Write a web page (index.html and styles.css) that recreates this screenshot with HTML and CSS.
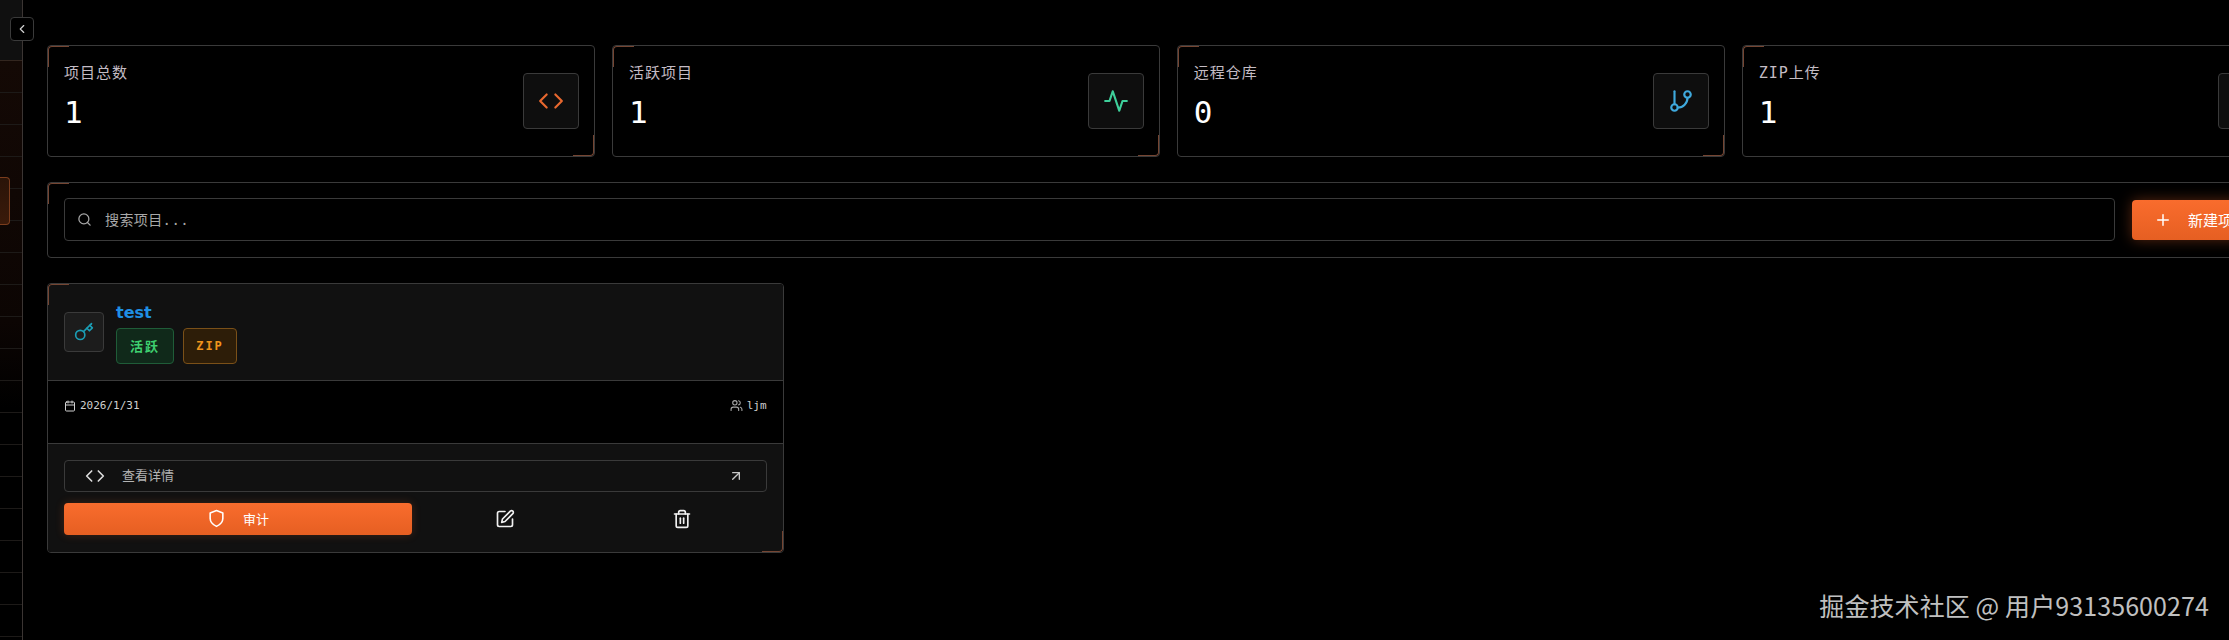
FILE: index.html
```html
<!DOCTYPE html>
<html lang="en">
<head>
    <meta charset="UTF-8">
    <meta name="viewport" content="width=device-width, initial-scale=1.0">
    <title>Projects</title>
    <link rel="stylesheet" href="styles.css">
</head>
<body>
    <div class="app">
        <aside class="sidebar">
            <div class="sidebar-head"></div>
            <div class="sidebar-nav">
                <div class="nav-active"></div>
            </div>
            <button class="toggle">
                <svg class="icon" width="14" height="14" viewBox="0 0 24 24"><path d="m15 18-6-6 6-6"/></svg>
            </button>
        </aside>

        <main class="main">
            <section class="stats">
                <div class="panel stat">
                    <div>
                        <div class="stat-label">项目总数</div>
                        <div class="stat-value">1</div>
                    </div>
                    <div class="stat-icon orange">
                        <svg class="icon" width="26" height="26" viewBox="0 0 24 24"><path d="m16 18 6-6-6-6"/><path d="m8 6-6 6 6 6"/></svg>
                    </div>
                </div>
                <div class="panel stat">
                    <div>
                        <div class="stat-label">活跃项目</div>
                        <div class="stat-value">1</div>
                    </div>
                    <div class="stat-icon green">
                        <svg class="icon" width="26" height="26" viewBox="0 0 24 24"><path d="M22 12h-4l-3 9L9 3l-3 9H2"/></svg>
                    </div>
                </div>
                <div class="panel stat">
                    <div>
                        <div class="stat-label">远程仓库</div>
                        <div class="stat-value">0</div>
                    </div>
                    <div class="stat-icon blue">
                        <svg class="icon" width="26" height="26" viewBox="0 0 24 24"><path d="M6 3v12"/><circle cx="18" cy="6" r="3"/><circle cx="6" cy="18" r="3"/><path d="M18 9a9 9 0 0 1-9 9"/></svg>
                    </div>
                </div>
                <div class="panel stat">
                    <div>
                        <div class="stat-label">ZIP上传</div>
                        <div class="stat-value">1</div>
                    </div>
                    <div class="stat-icon purple">
                        <svg class="icon" width="26" height="26" viewBox="0 0 24 24"><path d="M12 3v12"/><path d="m17 8-5-5-5 5"/><path d="M21 15v4a2 2 0 0 1-2 2H5a2 2 0 0 1-2-2v-4"/></svg>
                    </div>
                </div>
            </section>

            <section class="panel toolbar">
                <div class="search">
                    <svg class="icon" width="15" height="15" viewBox="0 0 24 24"><circle cx="11" cy="11" r="8"/><path d="m21 21-4.3-4.3"/></svg>
                    <input class="search-input" type="text" placeholder="搜索项目...">
                </div>
                <button class="btn-new">
                    <svg class="icon" width="18" height="18" viewBox="0 0 24 24"><path d="M5 12h14"/><path d="M12 5v14"/></svg>
                    <span>新建项目</span>
                </button>
            </section>

            <section class="projects">
                <article class="panel project">
                    <div class="project-head">
                        <div class="project-icon">
                            <svg class="icon" width="20" height="20" viewBox="0 0 24 24"><circle cx="7.5" cy="15.5" r="5.5"/><path d="m21 2-9.6 9.6"/><path d="m15.5 7.5 3 3L22 7l-3-3"/></svg>
                        </div>
                        <div>
                            <div class="project-name">test</div>
                            <div class="badges">
                                <span class="badge badge-green">活跃</span>
                                <span class="badge badge-amber">ZIP</span>
                            </div>
                        </div>
                    </div>
                    <div class="project-meta">
                        <span class="meta-item">
                            <svg class="icon" width="12" height="12" viewBox="0 0 24 24"><path d="M8 2v4"/><path d="M16 2v4"/><rect x="3" y="4" width="18" height="18" rx="2"/><path d="M3 10h18"/></svg>
                            2026/1/31
                        </span>
                        <span class="meta-item">
                            <svg class="icon users-icon" width="13" height="13" viewBox="0 0 24 24"><path d="M16 21v-2a4 4 0 0 0-4-4H6a4 4 0 0 0-4 4v2"/><circle cx="9" cy="7" r="4"/><path d="M22 21v-2a4 4 0 0 0-3-3.87"/><path d="M16 3.13a4 4 0 0 1 0 7.75"/></svg>
                            ljm
                        </span>
                    </div>
                    <div class="project-foot">
                        <button class="btn-view">
                            <svg class="icon code-icon" width="20" height="20" viewBox="0 0 24 24"><path d="m16 18 6-6-6-6"/><path d="m8 6-6 6 6 6"/></svg>
                            <span class="view-text">查看详情</span>
                            <svg class="icon arrow-icon" width="16" height="16" viewBox="0 0 24 24"><path d="M7 7h10v10"/><path d="M7 17 17 7"/></svg>
                        </button>
                        <div class="actions">
                            <button class="btn-audit">
                                <svg class="icon" width="19" height="19" viewBox="0 0 24 24"><path d="M12 22s8-4 8-10V5l-8-3-8 3v7c0 6 8 10 8 10z"/></svg>
                                <span>审计</span>
                            </button>
                            <button class="btn-ghost">
                                <svg class="icon" width="20" height="20" viewBox="0 0 24 24"><path d="M12 3H5a2 2 0 0 0-2 2v14a2 2 0 0 0 2 2h14a2 2 0 0 0 2-2v-7"/><path d="M18.4 2.6a2.1 2.1 0 0 1 3 3L12 15l-4 1 1-4z"/></svg>
                            </button>
                            <button class="btn-ghost">
                                <svg class="icon" width="20" height="20" viewBox="0 0 24 24"><path d="M3 6h18"/><path d="M19 6v14c0 1-1 2-2 2H7c-1 0-2-1-2-2V6"/><path d="M8 6V4c0-1 1-2 2-2h4c1 0 2 1 2 2v2"/><path d="M10 11v6"/><path d="M14 11v6"/></svg>
                            </button>
                        </div>
                    </div>
                </article>
            </section>
        </main>
    </div>

    <div class="watermark">掘金技术社区 @ 用户93135600274</div>
</body>
</html>
```

FILE: styles.css
```css
* {
    box-sizing: border-box;
}

html, body {
    margin: 0;
    padding: 0;
    height: 640px;
    overflow: hidden;
    background: #000;
}

body {
    font-family: "DejaVu Sans Mono", "Noto Sans CJK SC", monospace;
    color: #fff;
}

button {
    font-family: inherit;
    cursor: pointer;
}

.icon {
    display: block;
    flex: none;
    fill: none;
    stroke: currentColor;
    stroke-width: 2;
    stroke-linecap: round;
    stroke-linejoin: round;
}

.app {
    display: flex;
    height: 640px;
}

/* sidebar, mostly collapsed out of view */
.sidebar {
    position: relative;
    flex: none;
    width: 23px;
    height: 640px;
    border-right: 1px solid #3b3533;
}

.sidebar-head {
    height: 61px;
    background: #101010;
    border-bottom: 1px solid #33261f;
}

.sidebar-nav {
    height: 579px;
    padding-top: 116px;
    background-image:
        repeating-linear-gradient(to bottom, transparent 0, transparent 31px, #1d1a18 31px, #1d1a18 32px),
        linear-gradient(to bottom, #140905 0, #0c0503 45%, #000 60%);
}

.nav-active {
    width: 10px;
    height: 48px;
    background: linear-gradient(to bottom, #2a1408, #3a1a0a);
    border: 1px solid #7b3d1d;
    border-left: none;
    border-radius: 0 4px 4px 0;
}

.toggle {
    position: absolute;
    top: 17px;
    left: 10px;
    display: flex;
    align-items: center;
    justify-content: center;
    width: 24px;
    height: 24px;
    padding: 0;
    background: #000;
    border: 1px solid #3a3a3a;
    border-radius: 4px;
    color: #d0d0d0;
}

.main {
    flex: none;
    width: 2267px;
    padding: 45px 0 0 24px;
}

/* panels with the orange corner ticks */
.panel {
    position: relative;
    border: 1px solid #3a3a3a;
    border-radius: 4px;
    background: #000;
}

.panel::before, .panel::after {
    content: "";
    position: absolute;
    width: 20px;
    height: 20px;
    pointer-events: none;
}

.panel::before {
    top: 0;
    left: 0;
    border-top: 1px solid #754532;
    border-left: 1px solid #754532;
    border-top-left-radius: 4px;
}

.panel::after {
    right: 0;
    bottom: 0;
    border-bottom: 1px solid #754532;
    border-right: 1px solid #754532;
    border-bottom-right-radius: 4px;
}

.stats {
    display: grid;
    grid-template-columns: repeat(4, 1fr);
    gap: 16.67px;
}

.stat {
    display: flex;
    align-items: center;
    justify-content: space-between;
    height: 111.7px;
    padding: 0 15px 0 16px;
}

.stat-label {
    margin-top: -8px;
    font-size: 15px;
    line-height: 20px;
    letter-spacing: 1px;
    color: #c4bcc4;
}

.stat-value {
    margin-top: 10px;
    font-size: 31px;
    line-height: 38px;
    color: #fff;
}

.stat-icon {
    display: flex;
    align-items: center;
    justify-content: center;
    width: 56px;
    height: 56px;
    background: #0e0e0e;
    border: 1px solid #3a3a3a;
    border-radius: 4px;
}

.orange { color: #e8682f; }
.green { color: #3ecf9a; }
.blue { color: #3fa9dc; }
.purple { color: #a070e0; }

.toolbar {
    display: flex;
    align-items: center;
    gap: 17px;
    height: 76.6px;
    margin-top: 25px;
    padding: 0 16px;
}

.search {
    display: flex;
    flex: 1;
    align-items: center;
    gap: 13px;
    height: 43px;
    padding: 0 12px;
    border: 1px solid #3a3a3a;
    border-radius: 4px;
    color: #a8a8a8;
}

.search-input {
    flex: 1;
    padding: 0;
    border: none;
    outline: none;
    background: transparent;
    font-family: inherit;
    font-size: 14px;
    letter-spacing: .4px;
    color: #a8a8a8;
}

.search-input::placeholder {
    color: #a8a8a8;
    opacity: 1;
}

.btn-new {
    display: flex;
    flex: none;
    align-items: center;
    gap: 16px;
    width: 141px;
    height: 40px;
    padding: 0 22px;
    background: linear-gradient(to bottom, #f96c2d, #e65f22);
    border: none;
    border-radius: 4px;
    box-shadow: 0 0 14px rgba(249, 108, 45, .35);
    font-size: 15px;
    font-weight: normal;
    white-space: nowrap;
    color: #fff;
}

.projects {
    display: grid;
    grid-template-columns: repeat(3, 1fr);
    gap: 16.67px;
    margin-top: 25px;
}

.project {
    overflow: hidden;
}

.project-head {
    display: flex;
    align-items: center;
    gap: 12px;
    height: 96.7px;
    padding: 0 16px;
    background: #111;
    border-bottom: 1px solid #3a3a3a;
}

.project-icon {
    display: flex;
    align-items: center;
    justify-content: center;
    width: 40px;
    height: 40px;
    background: #1c1c1c;
    border: 1px solid #3a3a3a;
    border-radius: 4px;
    color: #1b9db4;
}

.project-name {
    margin-top: 2px;
    font-family: "DejaVu Sans", sans-serif;
    font-size: 16px;
    font-weight: bold;
    line-height: 20px;
    color: #1f8fe4;
}

.badges {
    display: flex;
    gap: 9px;
    margin-top: 5px;
}

.badge {
    display: flex;
    align-items: center;
    justify-content: center;
    height: 36px;
    border-radius: 4px;
    font-size: 12px;
    font-weight: bold;
    letter-spacing: 2px;
}

.badge-green {
    width: 58px;
    background: #10291a;
    border: 1px solid #1f5c38;
    font-size: 13px;
    color: #3fd070;
}

.badge-amber {
    width: 54px;
    background: #2d1d08;
    border: 1px solid #7a5018;
    color: #f0941c;
}

.project-meta {
    display: flex;
    align-items: flex-start;
    justify-content: space-between;
    height: 63px;
    padding: 18px 16px 0;
    border-bottom: 1px solid #3a3a3a;
    font-size: 11px;
    line-height: 14px;
    color: #cfcfcf;
}

.meta-item {
    display: flex;
    align-items: center;
    gap: 4px;
}

.users-icon {
    color: #a8a8a8;
}

.project-foot {
    padding: 16px;
    background: #111;
    height: 108px;
}

.btn-view {
    display: flex;
    align-items: center;
    width: 100%;
    height: 32px;
    padding: 0 20px;
    background: transparent;
    border: 1px solid #3a3a3a;
    border-radius: 4px;
    font-size: 13px;
    color: #b4b4b4;
}

.code-icon {
    color: #d8d8d8;
}

.view-text {
    margin-top: -3px;
    margin-left: 17px;
    flex: 1;
    text-align: left;
}

.arrow-icon {
    margin-right: 2px;
    color: #c8c8c8;
}

.actions {
    display: flex;
    gap: 8px;
    margin-top: 11px;
}

.btn-audit {
    display: flex;
    flex: none;
    align-items: center;
    justify-content: center;
    gap: 17px;
    width: 348px;
    height: 32px;
    background: linear-gradient(to bottom, #f96c2d, #e65f22);
    border: none;
    border-radius: 4px;
    box-shadow: 0 0 10px rgba(249, 108, 45, .2);
    font-size: 13px;
    color: #fff;
}

.btn-ghost {
    display: flex;
    flex: 1;
    align-items: center;
    justify-content: center;
    height: 32px;
    background: transparent;
    border: none;
    color: #f0f0f0;
}

.watermark {
    position: absolute;
    top: 590px;
    right: 20px;
    font-family: "Noto Sans CJK SC", "Noto Sans", sans-serif;
    font-size: 25px;
    line-height: 30px;
    letter-spacing: .1px;
    white-space: nowrap;
    color: #c0c0c0;
}
```
